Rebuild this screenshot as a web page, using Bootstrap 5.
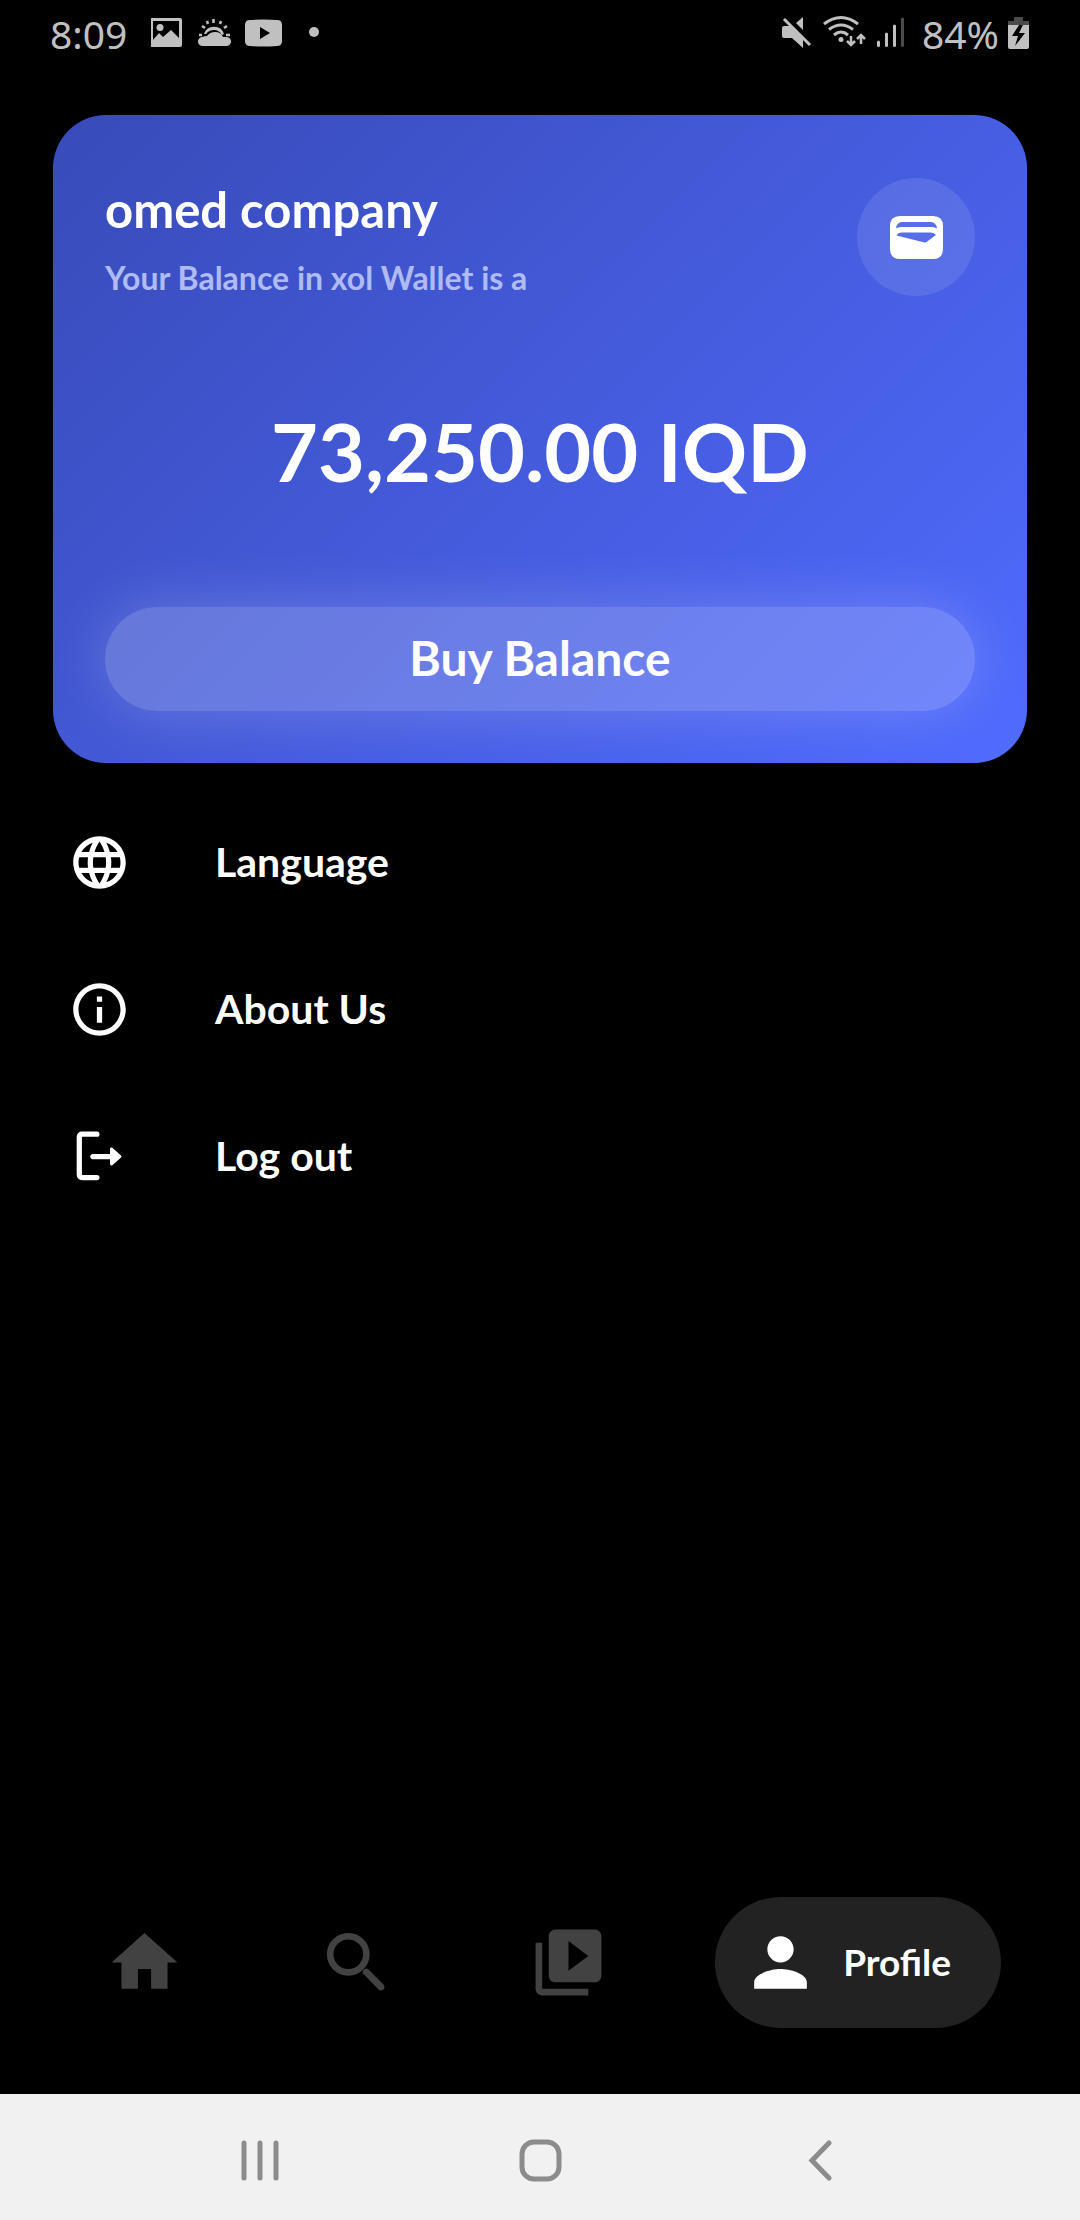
<!DOCTYPE html>
<html lang="en" data-bs-theme="dark">
<head>
<meta charset="utf-8">
<meta name="viewport" content="width=device-width, initial-scale=1">
<title>Profile</title>
<link href="https://cdn.jsdelivr.net/npm/bootstrap@5.3.0/dist/css/bootstrap.min.css" rel="stylesheet">
<style>
  body { background: #000; color: #fff; font-family: Lato, "Open Sans", sans-serif; font-weight: 700; }
  svg { display: block; flex: none; }
  .status-bar { height: 70px; padding: 0 50px; color: #c0c0c0; font: 400 39px/1 "Noto Sans", sans-serif; }
  .status-bar span { padding-bottom: 3px; }
  .wallet-card {
    margin: 45px 53px 0; padding: 52px; border: 0; border-radius: 53px; overflow: hidden; color: #fff;
    background: linear-gradient(135deg, #384bb8, #506bff);
  }
  .owner-name { font-size: 49px; line-height: 56px; margin: 14px 0 0; font-weight: 700; }
  .balance-note { font-size: 32px; line-height: 40px; margin: 21px 0 0; color: #b0bbf3; }
  .wallet-badge { width: 118px; height: 118px; margin-top: 11px; background: rgba(255,255,255,.1); }
  .amount { font-size: 81px; line-height: 96px; margin: 105px 0 108px; }
  .btn-buy {
    height: 104px; border: 0; border-radius: 52px; padding: 0 0 2px; color: #fff; font-size: 48px; line-height: 56px; font-weight: 700;
    background: rgba(255,255,255,.2); box-shadow: 0 0 60px rgba(255,255,255,.2);
  }
  .btn-buy:hover, .btn-buy:active { color: #fff; background: rgba(255,255,255,.26); }
  .menu { margin: 26px 0 0; padding: 0 68px; }
  .menu-row { height: 147px; padding: 0; gap: 84px; border: 0; background: none; color: #fff; font-size: 41px; line-height: 48px; font-weight: 700; }
  .menu-row span, .tab-link span { padding-bottom: 2px; }
  .tab-bar { padding: 0 79px 66px; }
  .tab-link { padding: 26px; color: #424242; border-radius: 66px; }
  .tab-link.active { gap: 23px; padding-right: 50px; background: #222; color: #fff; font-size: 37px; line-height: 44px; }
  .system-bar { height: 126px; background: #f1f1f1; padding: 6px 120px 0; }
  .system-bar .btn { border: 0; padding: 0; width: 281px; color: #8c8c8c; }
</style>
</head>
<body class="min-vh-100 d-flex flex-column">

<header class="status-bar d-flex align-items-center justify-content-between">
  <div class="d-flex align-items-center">
    <span>8:09</span>
    <svg class="ms-4" width="230" height="70" viewBox="150 0 230 70" fill="currentColor" aria-hidden="true">
      <path fill-rule="evenodd" d="M149 18h28a2 2 0 0 1 2 2v25a2 2 0 0 1-2 2h-28a2 2 0 0 1-2-2V20a2 2 0 0 1 2-2zm1 3v19l6-7 4 4 8-7 8 8V21z" transform="translate(2 0)"/>
      <circle cx="159" cy="27.500" r="3.500"/>
      <path d="M202 46a4.500 4.500 0 0 1-1-9q3-1 5-1 3-4 8-4 6 0 8 5h3a4.500 4.500 0 0 1 1 9z"/>
      <path d="M203 34a10.500 10.500 0 0 1 20 0l-2 1q-3-5-8-5-5 0-8 4z"/>
      <path d="M198 35h3M201 26l3 2M206 21l1 3M212.500 19v4M220 21l-1 3M226 26l-3 2M229 35h-4" stroke="currentColor" stroke-width="2.500"/>
      <path fill-rule="evenodd" d="M249 20q13-1 27 0 5 0 5 5v16q0 5-5 5-14 1-27 0-5 0-5-5V25q0-5 5-5zm10 7v12l10-6z"/>
      <circle cx="313" cy="32" r="5"/>
    </svg>
  </div>
  <div class="d-flex align-items-center">
    <svg width="124" height="70" viewBox="779 0 124 70" fill="currentColor" aria-hidden="true">
      <path d="M781 26h8l11 11v11l-11-10h-8q-2 0-2-2v-8q0-2 2-2zM800 17v13l-7-7z"/>
      <path d="M781 19l26 26" stroke="currentColor" stroke-width="3"/>
      <g fill="none" stroke="currentColor" stroke-width="3">
        <path d="M821 24q17-13 34 0M826 29.500q12-9 24 0M831 35q7-6 14 0"/>
        <path stroke-width="2.500" d="M848 36v9m-4-4l4 4 4-4M858 44v-9m-4 4l4-4 4 4"/>
      </g>
      <circle cx="838" cy="39.500" r="2.500"/>
      <g stroke="currentColor" stroke-width="3" stroke-linecap="round"><path d="M875.500 42v3.500M883.500 34v11.500M891.500 26v19.500"/><path d="M899.500 19v26.500" stroke="#4b4b4b"/></g>
    </svg>
    <span class="ms-3">84%</span>
    <svg class="ms-2" width="23" height="70" viewBox="1007 0 23 70" aria-hidden="true">
      <path fill="#4b4b4b" d="M1014 17h9v4h6v4h-21v-4h6z"/>
      <path fill="currentColor" d="M1008 25h21v22q0 2-2 2h-17q-2 0-2-2z"/>
      <path fill="#000" d="M1019 25l-7 11h6l-3 10 10-13h-6l4-8z"/>
    </svg>
  </div>
</header>

<main class="flex-grow-1">
  <section class="card wallet-card">
    <div class="d-flex justify-content-between align-items-start">
      <div>
        <h1 class="owner-name">omed company</h1>
        <p class="balance-note">Your Balance in xol Wallet is a</p>
      </div>
      <div class="wallet-badge rounded-circle d-flex align-items-center justify-content-center">
        <svg width="53" height="43" viewBox="0 0 53 43" aria-hidden="true">
          <path fill="#fff" fill-rule="evenodd" d="M10 0h33q10 0 10 10v23q0 10-10 10H10Q0 43 0 33V10Q0 0 10 0zM12 6q-5 0-6 6.500 2-1.500 5-1.500h31q3 0 5 1.500Q46 6 41 6zM12 16.500q-4 0-5.500 3l28 7q1 .3 2-.5l9.500-7q-2-2.500-5-2.500z"/>
        </svg>
      </div>
    </div>
    <p class="amount text-center">73,250.00 IQD</p>
    <button type="button" class="btn btn-buy w-100">Buy Balance</button>
  </section>

  <nav class="menu list-group list-group-flush" aria-label="Settings">
    <a href="#language" class="menu-row list-group-item d-flex align-items-center">
      <svg width="63" height="63" viewBox="0 0 24 24" fill="currentColor" aria-hidden="true"><path d="M11.990 2C6.470 2 2 6.480 2 12s4.470 10 9.990 10C17.520 22 22 17.520 22 12S17.520 2 11.990 2zm6.930 6h-2.950c-.32-1.250-.78-2.450-1.380-3.560 1.840.63 3.370 1.910 4.330 3.560zM12 4.040c.83 1.200 1.480 2.530 1.910 3.960h-3.820c.43-1.430 1.080-2.760 1.910-3.960zM4.260 14C4.100 13.360 4 12.690 4 12s.1-1.360.26-2h3.380c-.08.66-.14 1.320-.14 2s.06 1.340.14 2H4.260zm.82 2h2.950c.32 1.250.78 2.450 1.380 3.560-1.840-.63-3.370-1.900-4.330-3.560zm2.950-8H5.080c.96-1.660 2.490-2.930 4.330-3.560C8.810 5.550 8.350 6.750 8.030 8zM12 19.960c-.83-1.200-1.480-2.530-1.910-3.960h3.820c-.43 1.430-1.080 2.760-1.910 3.960zM14.340 14H9.660c-.09-.66-.16-1.320-.16-2s.07-1.350.16-2h4.680c.09.65.16 1.320.16 2s-.07 1.340-.16 2zm.25 5.560c.6-1.110 1.060-2.310 1.380-3.560h2.950c-.96 1.650-2.490 2.930-4.330 3.560zM16.360 14c.08-.66.14-1.320.14-2s-.06-1.340-.14-2h3.380c.16.64.26 1.310.26 2s-.1 1.360-.26 2h-3.380z"/></svg>
      <span>Language</span>
    </a>
    <a href="#about" class="menu-row list-group-item d-flex align-items-center">
      <svg width="63" height="63" viewBox="0 0 24 24" fill="currentColor" aria-hidden="true"><path d="M11 7h2v2h-2zm0 4h2v6h-2zm1-9C6.480 2 2 6.480 2 12s4.480 10 10 10 10-4.480 10-10S17.520 2 12 2zm0 18c-4.410 0-8-3.590-8-8s3.590-8 8-8 8 3.590 8 8-3.590 8-8 8z"/></svg>
      <span>About Us</span>
    </a>
    <button type="button" class="menu-row list-group-item d-flex align-items-center">
      <svg width="63" height="63" viewBox="0 0 24 24" fill="none" stroke="currentColor" stroke-width="2" stroke-linecap="round" aria-hidden="true"><path d="M11 3.500H5.500q-1.200 0-1.200 1.200v14.100q0 1.200 1.200 1.200H11M9.500 12h8"/><path d="M16 9.100c0-.5.600-.7.900-.4l3.300 2.900q.4.400 0 .8l-3.300 2.900c-.3.300-.9.100-.9-.4z" fill="currentColor" stroke="none"/></svg>
      <span>Log out</span>
    </button>
  </nav>
</main>

<nav class="tab-bar d-flex justify-content-between align-items-center" aria-label="Main">
  <a href="#home" class="tab-link" aria-label="Home"><svg width="79" height="79" viewBox="0 0 24 24" fill="currentColor"><path d="M10 20v-6h4v6h5v-8h3L12 3 2 12h3v8z"/></svg></a>
  <a href="#search" class="tab-link" aria-label="Search"><svg width="79" height="79" viewBox="0 0 24 24" fill="none" stroke="currentColor" stroke-width="2"><circle cx="9.500" cy="9.500" r="5.500"/><path fill="currentColor" stroke="none" d="M13.900 15.300V14.600l.7-.7h.8l4.800 4.800q.6.800 0 1.500-.8.600-1.500 0z"/></svg></a>
  <a href="#library" class="tab-link" aria-label="Library"><svg width="79" height="79" viewBox="0 0 24 24" fill="currentColor"><path d="M4 6H2v14c0 1.100.9 2 2 2h14v-2H4V6zm16-4H8c-1.100 0-2 .9-2 2v12c0 1.100.9 2 2 2h12c1.100 0 2-.9 2-2V4c0-1.100-.9-2-2-2zm-8 12.500v-9l6 4.500-6 4.500z"/></svg></a>
  <a href="#profile" class="tab-link active d-flex align-items-center text-decoration-none" aria-current="page">
    <svg width="79" height="79" viewBox="0 0 24 24" fill="currentColor" aria-hidden="true"><path d="M12 12c2.210 0 4-1.790 4-4s-1.790-4-4-4-4 1.790-4 4 1.790 4 4 4zm0 2c-2.670 0-8 1.340-8 4v2h16v-2c0-2.660-5.330-4-8-4z"/></svg>
    <span>Profile</span>
  </a>
</nav>

<footer class="system-bar d-flex justify-content-center align-items-center">
  <button type="button" class="btn d-flex justify-content-center" aria-label="Recent apps"><svg width="42" height="44" viewBox="0 0 42 44" fill="none" stroke="currentColor" stroke-width="5" stroke-linecap="round"><path d="M5 5v35M21 5v35M37 5v35"/></svg></button>
  <button type="button" class="btn d-flex justify-content-center" aria-label="Home"><svg width="44" height="44" viewBox="0 0 44 44" fill="none" stroke="currentColor" stroke-width="5"><rect x="4" y="4" width="37" height="37" rx="12"/></svg></button>
  <button type="button" class="btn d-flex justify-content-center" aria-label="Back"><svg width="24" height="44" viewBox="0 0 24 44" fill="none" stroke="currentColor" stroke-width="5" stroke-linecap="round"><path d="M21 5L4 22.500 21 40"/></svg></button>
</footer>

<script src="https://cdn.jsdelivr.net/npm/bootstrap@5.3.0/dist/js/bootstrap.bundle.min.js"></script>
</body>
</html>
